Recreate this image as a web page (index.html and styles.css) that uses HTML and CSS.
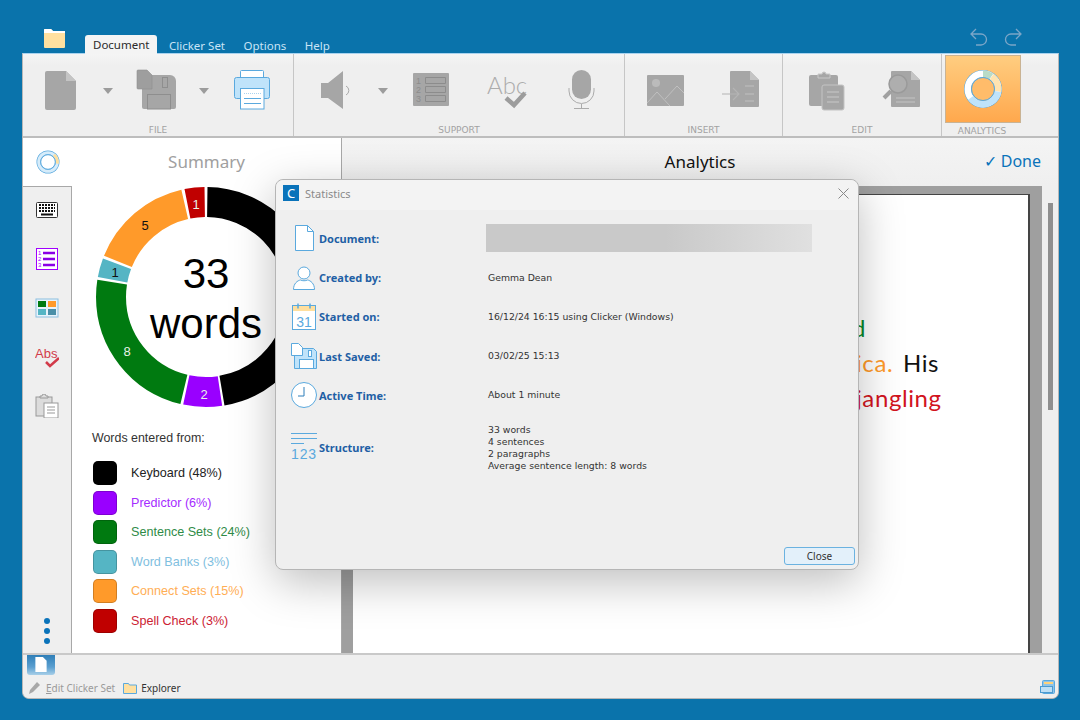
FILE: index.html
```html
<!DOCTYPE html>
<html lang="en">
<head>
<meta charset="utf-8">
<title>Statistics</title>
<link rel="stylesheet" href="styles.css">
</head>
<body>
<div class="screen">
  <header class="topbar">
    <svg class="folder" viewBox="0 0 23 22"><path d="M1 3a1 1 0 0 1 1-1h6l2 2h11a1 1 0 0 1 1 1v15a1 1 0 0 1-1 1H2a1 1 0 0 1-1-1z" fill="#ffe0a0"/><path d="M1 3a1 1 0 0 1 1-1h6l2 2h12v2H1z" fill="#fff"/></svg>
    <nav class="tabs">
      <span class="tab active">Document</span>
      <span class="tab">Clicker Set</span>
      <span class="tab">Options</span>
      <span class="tab">Help</span>
    </nav>
    <div class="history">
      <svg viewBox="0 0 18 18"><path d="M6 1 1 6l5 5M1 6h10a5.500 5.500 0 0 1 0 11H6" fill="none" stroke="#7ba6c8" stroke-width="1.300"/></svg>
      <svg viewBox="0 0 18 18"><path d="m12 1 5 5-5 5M17 6H7a5.500 5.500 0 0 0 0 11h5" fill="none" stroke="#7ba6c8" stroke-width="1.300"/></svg>
    </div>
  </header>

  <div class="window">
    <section class="ribbon">
      <div class="group g-file">
        <div class="tools">
          <svg class="tool" viewBox="0 0 40 42"><path d="M7 1h19l10 10v27a2 2 0 0 1-2 2H7a2 2 0 0 1-2-2V3a2 2 0 0 1 2-2z" fill="#a6a6a6"/><path d="M26 1v10h10z" fill="#c4c4c4"/></svg>
          <i class="caret"></i>
          <svg class="tool" viewBox="0 0 40 42"><path d="M6 5h28a6 6 0 0 1 6 6v26a2 2 0 0 1-2 2H8a2 2 0 0 1-2-2z" fill="#a6a6a6"/><path d="M2 0h9l5 5v14H2a1 1 0 0 1-1-1V1a1 1 0 0 1 1-1z" fill="#9e9e9e" stroke="#8e8e8e" stroke-width=".6"/><rect x="26.500" y="7.500" width="5" height="10" fill="none" stroke="#8e8e8e"/><rect x="11.500" y="24.500" width="23" height="14.500" fill="none" stroke="#8e8e8e"/></svg>
          <i class="caret"></i>
          <svg class="tool" viewBox="0 0 40 42"><rect x="8.500" y=".500" width="23" height="9" rx="1" fill="#fff" stroke="#5aa9de"/><rect x="2.500" y="7.500" width="35" height="21" rx="2" fill="#bfe3fa" stroke="#5aa9de"/><rect x="8.500" y="18.500" width="23.500" height="20.500" fill="#fff" stroke="#5aa9de"/><path d="M12 23.500h17" stroke="#a9d3ef" stroke-dasharray="1 1"/><path d="M12 28.500h17M12 33.500h17" stroke="#5aa9de"/></svg>
        </div>
        <div class="group-label">FILE</div>
      </div>
      <div class="group g-support">
        <div class="tools">
          <svg class="tool" viewBox="0 0 40 42"><path d="M6 13h7l15-12v38L13 28H6z" fill="#a6a6a6"/><path d="M31 16a5 5 0 0 1 0 9" fill="none" stroke="#aaa"/></svg>
          <i class="caret"></i>
          <svg class="tool" viewBox="0 0 40 42"><rect x="2" y="3" width="36" height="33" rx="1" fill="#a6a6a6"/><path d="M14.500 7.500h20v6h-20zM14.500 16.500h20v6h-20zM14.500 25.500h20v6h-20z" fill="none" stroke="#8c8c8c"/><text class="mini" x="5" y="14">1</text><text class="mini" x="5" y="23">2</text><text class="mini" x="5" y="32">3</text></svg>
          <svg class="tool" viewBox="0 0 40 42"><text class="abc" x="1" y="24">Abc</text><path d="m20 28 8 7 11-12" fill="none" stroke="#9c9c9c" stroke-width="4.500"/></svg>
          <svg class="tool" viewBox="0 0 40 42"><rect x="11" y="0" width="19" height="29" rx="9.500" fill="#a6a6a6"/><path d="M8 18v3a12.500 12.500 0 0 0 25 0v-3M20.500 34v4M13 38.500h15" fill="none" stroke="#ababab"/></svg>
        </div>
        <div class="group-label">SUPPORT</div>
      </div>
      <div class="group g-insert">
        <div class="tools">
          <svg class="tool" viewBox="0 0 40 42"><rect x="2" y="5" width="37" height="31" rx="1" fill="#a6a6a6"/><path d="m2 33 10-11 13 14M20 29 32 16l7 7" fill="none" stroke="#c0c0c0"/><circle cx="11" cy="13" r="4" fill="#bbb"/></svg>
          <svg class="tool" viewBox="0 0 40 42"><path d="M11 1h19l9 9v26a1 1 0 0 1-1 1H11a1 1 0 0 1-1-1V2a1 1 0 0 1 1-1z" fill="#a6a6a6"/><path d="M30 1v9h9z" fill="#c4c4c4"/><path d="M2 24h17m-6-6 6 6-6 6" fill="none" stroke="#b4b4b4" stroke-width="1.200"/><path d="M25 16h9M25 24h9M25 31h9" stroke="#c0c0c0"/></svg>
        </div>
        <div class="group-label">INSERT</div>
      </div>
      <div class="group g-edit">
        <div class="tools">
          <svg class="tool" viewBox="0 0 40 42"><rect x="3" y="5" width="29" height="31" rx="2" fill="#a6a6a6"/><path d="M12 8V4h4a2 2 0 0 1 4 0h4v4z" fill="#a6a6a6" stroke="#c8c8c8"/><rect x="16" y="15" width="22" height="25" rx="2" fill="#a6a6a6" stroke="#c4c4c4"/><path d="M21 22h12M21 27h12M21 32h12" stroke="#c8c8c8"/></svg>
          <svg class="tool" viewBox="0 0 40 42"><path d="M11 1h19l9 9v26a1 1 0 0 1-1 1H11a1 1 0 0 1-1-1V2a1 1 0 0 1 1-1z" fill="#a6a6a6"/><path d="M30 1v9h9z" fill="#c4c4c4"/><circle cx="17" cy="14" r="9" fill="#aeaeae" stroke="#9a9a9a" stroke-width="1.500"/><path d="m10 21-7 7" stroke="#a0a0a0" stroke-width="4"/><path d="M15 28h19M15 32h19" stroke="#c4c4c4"/></svg>
        </div>
        <div class="group-label">EDIT</div>
      </div>
      <div class="group g-analytics">
        <div class="tile">
          <svg class="tile-icon" viewBox="0 0 40 40"><circle cx="20" cy="20" r="19" fill="#5aa9de"/><circle cx="20" cy="20" r="15.200" fill="none" stroke="#fff" stroke-width="6.500"/><circle cx="20" cy="20" r="15.200" pathLength="360" fill="none" stroke="#b9dcc8" stroke-width="6.500" stroke-dasharray="34 360" transform="rotate(-90 20 20)"/><circle cx="20" cy="20" r="15.200" pathLength="360" fill="none" stroke="#ffe3b0" stroke-width="6.500" stroke-dasharray="64 360" transform="rotate(-55 20 20)"/><circle cx="20" cy="20" r="15.200" pathLength="360" fill="none" stroke="#bfe3fa" stroke-width="6.500" stroke-dasharray="134 360" transform="rotate(10 20 20)"/><circle cx="20" cy="20" r="11.500" fill="#ffbc6a" stroke="#5aa9de"/></svg>
        </div>
        <div class="group-label">ANALYTICS</div>
      </div>
    </section>

    <main class="main">
      <section class="summary">
        <aside class="rail">
          <div class="rail-head">
            <svg class="rail-logo" viewBox="0 0 24 24"><circle cx="12" cy="12" r="11.500" fill="#5aa9de"/><circle cx="12" cy="12" r="9.300" fill="none" stroke="#d6ecfa" stroke-width="3"/><circle cx="12" cy="12" r="9.300" pathLength="360" fill="none" stroke="#ffdf9e" stroke-width="3" stroke-dasharray="60 360" transform="rotate(-50 12 12)"/><circle cx="12" cy="12" r="7.300" fill="#fff" stroke="#5aa9de"/></svg>
          </div>
          <div class="rail-body">
            <svg class="rail-icon" viewBox="0 0 24 24"><rect x="1.500" y="4.500" width="21" height="15" rx="1" fill="#fff" stroke="#333"/><path d="M4 7h16M4 10h16M4 13h16" stroke="#111" stroke-width="2" stroke-dasharray="2 1"/><path d="M6 16.500h12" stroke="#111" stroke-width="2"/></svg>
            <svg class="rail-icon" viewBox="0 0 24 24"><rect x="1.500" y="1.500" width="21" height="21" fill="#fff" stroke="#a000ff"/><path d="M8 6h12M8 12h12M8 18h12" stroke="#8a00e6" stroke-width="2.500"/><text class="mini purple" x="3" y="8">1</text><text class="mini purple" x="3" y="14">2</text><text class="mini purple" x="3" y="20">3</text></svg>
            <svg class="rail-icon" viewBox="0 0 24 24"><rect x="1" y="3" width="22" height="18" fill="#e8f3fb" stroke="#8cbfe0"/><rect x="3" y="5" width="8" height="6" fill="#007a10"/><rect x="13" y="5" width="8" height="6" fill="#ff9a2a"/><rect x="3" y="13" width="8" height="6" fill="#55b5c4"/><rect x="13" y="13" width="8" height="6" fill="#4a8fa8"/></svg>
            <svg class="rail-icon" viewBox="0 0 24 24"><text class="abs" x="0" y="13">Abs</text><path d="m11 17 4 4 9-8" fill="none" stroke="#d23b4a" stroke-width="2.500"/></svg>
            <svg class="rail-icon" viewBox="0 0 24 24"><rect x="1" y="3" width="16" height="19" fill="#dcdcdc" stroke="#999"/><path d="M5 4V2h2a2 2 0 0 1 4 0h2v2z" fill="#ddd" stroke="#999"/><rect x="9" y="9" width="14" height="15" fill="#fff" stroke="#999"/><path d="M12 13h8M12 16h8M12 19h8" stroke="#999"/></svg>
            <div class="dots"><i></i><i></i><i></i></div>
          </div>
        </aside>
        <div class="summary-body">
          <h2 class="summary-title">Summary</h2>
          <svg class="donut" viewBox="0 0 220 220">
            <g transform="rotate(-90 110 110)" fill="none" stroke-width="30">
              <circle cx="110" cy="110" r="95" pathLength="360" stroke="#000" stroke-dasharray="169.500 360" stroke-dashoffset="-0.800"/>
              <circle cx="110" cy="110" r="95" pathLength="360" stroke="#9900ff" stroke-dasharray="20.500 360" stroke-dashoffset="-171.500"/>
              <circle cx="110" cy="110" r="95" pathLength="360" stroke="#007a10" stroke-dasharray="85.500 360" stroke-dashoffset="-193.500"/>
              <circle cx="110" cy="110" r="95" pathLength="360" stroke="#55b5c4" stroke-dasharray="10 360" stroke-dashoffset="-280.500"/>
              <circle cx="110" cy="110" r="95" pathLength="360" stroke="#ff9a2a" stroke-dasharray="55 360" stroke-dashoffset="-292"/>
              <circle cx="110" cy="110" r="95" pathLength="360" stroke="#c00000" stroke-dasharray="10.500 360" stroke-dashoffset="-348.700"/>
            </g>
            <text class="seg light" x="100" y="22">1</text>
            <text class="seg" x="49" y="43">5</text>
            <text class="seg" x="19" y="90">1</text>
            <text class="seg light" x="31" y="169">8</text>
            <text class="seg light" x="108" y="212">2</text>
            <text class="big" x="110" y="101">33</text>
            <text class="big" x="110" y="151">words</text>
          </svg>
          <h3 class="legend-title">Words entered from:</h3>
          <ul class="legend">
            <li class="legend-row"><span class="swatch s-keyboard"></span><span class="c-keyboard">Keyboard (48%)</span></li>
            <li class="legend-row"><span class="swatch s-predictor"></span><span class="c-predictor">Predictor (6%)</span></li>
            <li class="legend-row"><span class="swatch s-sentence"></span><span class="c-sentence">Sentence Sets (24%)</span></li>
            <li class="legend-row"><span class="swatch s-banks"></span><span class="c-banks">Word Banks (3%)</span></li>
            <li class="legend-row"><span class="swatch s-connect"></span><span class="c-connect">Connect Sets (15%)</span></li>
            <li class="legend-row"><span class="swatch s-spell"></span><span class="c-spell">Spell Check (3%)</span></li>
          </ul>
        </div>
      </section>

      <section class="analytics">
        <div class="analytics-head">
          <span></span>
          <h2 class="analytics-title">Analytics</h2>
          <span class="done">✓ Done</span>
        </div>
        <div class="doc-row">
          <div class="doc-area">
            <div class="page">
              <p class="line c-sentence-doc first">d</p>
              <p class="line"><span class="c-connect-doc">ica.</span> His</p>
              <p class="line c-spell-doc">jangling</p>
            </div>
          </div>
          <div class="scroll"><div class="thumb"></div></div>
        </div>
      </section>
    </main>

    <footer class="bottom">
      <div class="doc-tab">
        <svg viewBox="0 0 14 16"><path d="M1 0h8l4 4v12H1z" fill="#fff"/></svg>
      </div>
      <div class="status">
        <svg class="pencil" viewBox="0 0 14 14"><path d="M1 13l1-4 7-8 3 3-7 7z" fill="#a8a8a8"/></svg>
        <span class="status-muted"><u>E</u>dit Clicker Set</span>
        <svg class="mini-folder" viewBox="0 0 14 12"><path d="M.500 1.500h5l1 1.500h7v8.500H.500z" fill="#ffe0a0" stroke="#5aa9de"/></svg>
        <span class="status-dark">Explorer</span>
        <svg class="kbd-icon" viewBox="0 0 15 15"><rect x="2.500" y=".500" width="12" height="13" rx="1" fill="#8fc4e8" stroke="#5aa9de"/><path d="M4 3h9" stroke="#ffd27a" stroke-width="2"/><rect x=".500" y="6.500" width="12" height="6" fill="#bfe0f5" stroke="#4d9bd0"/></svg>
      </div>
    </footer>
  </div>

  <div class="dialog">
    <div class="dialog-title">
      <span class="app-badge">C</span>
      <span class="dialog-name">Statistics</span>
      <svg class="dialog-x" viewBox="0 0 11 11"><path d="m.500.500 10 10m0-10-10 10" stroke="#888" fill="none"/></svg>
    </div>
    <div class="stats">
      <div class="stat stat-first">
        <svg class="stat-icon" viewBox="0 0 28 28"><path d="M5.500 1.500h12l6 6v19h-18z" fill="#fff" stroke="#5aa9de"/><path d="M17.500 1.500v6h6" fill="none" stroke="#5aa9de"/></svg>
        <span class="stat-label">Document:</span>
        <div class="redacted"></div>
      </div>
      <div class="stat">
        <svg class="stat-icon" viewBox="0 0 28 28"><circle cx="14" cy="9" r="6" fill="#fff" stroke="#5aa9de"/><path d="M3.500 25.500c0-6 4-9 7-9.500 2 1 5 1 7 0 3 .5 7 3.500 7 9.500z" fill="#fff" stroke="#5aa9de"/></svg>
        <span class="stat-label">Created by:</span>
        <span class="stat-value">Gemma Dean</span>
      </div>
      <div class="stat">
        <svg class="stat-icon" viewBox="0 0 28 28"><rect x="2.500" y="2.500" width="23" height="24" fill="#fff" stroke="#5aa9de"/><rect x="3" y="3" width="22" height="5" fill="#ffdf9e"/><path d="M8 .500v5M20 .500v5" stroke="#5aa9de" stroke-width="1.500"/><text class="cal" x="14" y="24">31</text></svg>
        <span class="stat-label">Started on:</span>
        <span class="stat-value">16/12/24 16:15 using Clicker (Windows)</span>
      </div>
      <div class="stat">
        <svg class="stat-icon" viewBox="0 0 28 28"><path d="M4.500 6.500h19l3 3v17h-22z" fill="#bfe3fa" stroke="#5aa9de"/><path d="M1.500 1.500h7l4 4v8h-11z" fill="#fff" stroke="#5aa9de"/><rect x="9.500" y="17.500" width="14" height="9" fill="#fff" stroke="#5aa9de"/><rect x="18.500" y="8.500" width="3" height="6" fill="#fff" stroke="#5aa9de"/></svg>
        <span class="stat-label">Last Saved:</span>
        <span class="stat-value">03/02/25 15:13</span>
      </div>
      <div class="stat">
        <svg class="stat-icon" viewBox="0 0 28 28"><circle cx="14" cy="14" r="12.500" fill="#fff" stroke="#5aa9de"/><path d="M14 6v9H8" fill="none" stroke="#2f7fba"/></svg>
        <span class="stat-label">Active Time:</span>
        <span class="stat-value">About 1 minute</span>
      </div>
      <div class="stat stat-tall">
        <svg class="stat-icon" viewBox="0 0 28 28"><path d="M1 .500h26M1 5.500h26M1 10.500h13" stroke="#5aa9de"/><text class="num" x="14" y="26">123</text></svg>
        <span class="stat-label">Structure:</span>
        <div class="stat-value stat-lines">33 words<br>4 sentences<br>2 paragraphs<br>Average sentence length: 8 words</div>
      </div>
    </div>
    <div class="dialog-foot"><button class="close-btn">Close</button></div>
  </div>
</div>
</body>
</html>
```

FILE: styles.css
```css
* { box-sizing: border-box; }
html, body { margin: 0; padding: 0; }
body { background: #0a73ab; font-family: "DejaVu Sans", sans-serif; }
h2, h3, p, ul { margin: 0; padding: 0; font-weight: normal; list-style: none; }
svg { display: block; flex: none; }

.screen { position: relative; width: 1080px; height: 720px; padding-left: 22px; overflow: hidden; }

.topbar { height: 53px; display: flex; align-items: flex-end; }
.folder { width: 23px; height: 22px; margin: 0 0 4px 21px; }
.tabs { display: flex; align-items: flex-end; gap: 18.500px; margin-left: 19px; }
.tab { height: 15px; font-size: 11.500px; line-height: 15px; color: #c9e4f6; white-space: nowrap; font-family: "Noto Sans", sans-serif; }
.tab.active { height: 19px; line-height: 19px; margin: 0 -7px -1px 0; padding: 0 8px; background: #f4f4f4; color: #2b2b2b; border-radius: 3px 3px 0 0; }
.history { margin-left: auto; margin-right: 58px; align-self: flex-start; display: flex; gap: 16px; padding-top: 28px; }
.history svg { width: 18px; height: 18px; }

.window { width: 1037px; height: 646px; display: flex; flex-direction: column; border: 1px solid #b7b7b7; border-top-color: #a9d3ef; border-radius: 0 0 7px 7px; background: #efefef; overflow: hidden; }

.ribbon { height: 84px; display: flex; border-bottom: 2px solid #bdbdbd; background: linear-gradient(#f5f5f5, #efefef 12px); flex: none; }
.group { display: flex; flex-direction: column; border-right: 1px solid #c6c6c6; }
.g-file { width: 271px; padding-left: 17px; }
.g-support { width: 331px; padding-left: 21px; }
.g-insert { width: 158px; padding-left: 20px; }
.g-edit { width: 159px; padding-left: 23px; }
.g-analytics { width: 80px; border-right: 0; padding-left: 3px; }
.tools { display: flex; gap: 35px; padding-top: 16px; height: 71px; }
.tool { width: 40px; height: 42px; overflow: visible; }
.caret { flex: none; width: 0; height: 0; margin: 18px -12px 0; border: 5px solid transparent; border-top: 6px solid #9c9c9c; border-bottom: 0; }
.group-label { height: 12px; margin-left: -17px; font-size: 9px; line-height: 12px; text-align: center; color: #a2a2a2; }
.g-support .group-label { margin-left: -21px; }
.g-insert .group-label { margin-left: -20px; }
.g-edit .group-label { margin-left: -23px; }
.g-analytics .group-label { margin-left: -3px; }
.tile { width: 76px; height: 68px; margin: 1px 0 2px; background: linear-gradient(#ffcd80, #ffa84d); border: 1px solid #c9b394; display: flex; align-items: center; justify-content: center; flex: none; }
.tile-icon { width: 40px; height: 40px; }

.mini { font-size: 9px; fill: #8c8c8c; font-family: "Liberation Sans", sans-serif; }
.mini.purple { font-size: 6px; fill: #a000ff; }
.abc { font-size: 24px; font-weight: 300; fill: #acacac; font-family: "Lato", sans-serif; }
.abs { font-size: 13px; fill: #d23b4a; font-family: "Liberation Sans", sans-serif; }

.main { flex: 1; display: flex; min-height: 0; }
.summary { width: 319px; display: flex; background: #fff; border-right: 1px solid #a8a8a8; }
.rail { width: 49px; display: flex; flex-direction: column; }
.rail-head { height: 48px; padding-bottom: 1px; display: flex; align-items: center; justify-content: center; }
.rail-logo { width: 24px; height: 24px; }
.rail-body { flex: 1; display: flex; flex-direction: column; align-items: center; gap: 25px; padding: 11px 0 9px; background: #efefef; border-top: 1px solid #a8a8a8; border-right: 1px solid #a8a8a8; }
.rail-icon { width: 24px; height: 24px; }
.dots { margin-top: auto; display: flex; flex-direction: column; gap: 4px; }
.dots i { width: 6px; height: 6px; border-radius: 50%; background: #0a73ba; }

.summary-body { flex: 1; display: flex; flex-direction: column; padding-left: 24px; min-width: 0; }
.summary-title { height: 48px; margin-left: -24px; line-height: 48px; text-align: center; font-size: 17px; color: #a0a0a0; font-family: "Noto Sans", sans-serif; }
.donut { width: 220px; height: 220px; margin-top: 1px; }
.seg { font-size: 13px; fill: #111; font-family: "Liberation Sans", sans-serif; text-anchor: middle; }
.seg.light { fill: #e8f3e8; }
.big { font-size: 42px; fill: #000; font-family: "Liberation Sans", sans-serif; text-anchor: middle; }
.legend-title { margin: 24px 0 0 -4px; font-size: 12.400px; line-height: 14px; color: #333; font-family: "Liberation Sans", sans-serif; }
.legend { display: flex; flex-direction: column; gap: 5.600px; margin: 16px 0 0 -3px; font-size: 12.600px; font-family: "Liberation Sans", sans-serif; }
.legend-row { display: flex; align-items: center; height: 24px; gap: 14px; }
.swatch { width: 24px; height: 24px; border-radius: 5px; border: 1px solid rgba(0,0,0,.18); }
.s-keyboard { background: #000; } .c-keyboard { color: #222; }
.s-predictor { background: #9900ff; } .c-predictor { color: #a52cff; }
.s-sentence { background: #007a10; } .c-sentence { color: #2f8b47; }
.s-banks { background: #55b5c4; } .c-banks { color: #7fc0e0; }
.s-connect { background: #ff9a2a; } .c-connect { color: #ffae55; }
.s-spell { background: #c00000; } .c-spell { color: #cc2233; }

.analytics { flex: 1; display: flex; flex-direction: column; min-width: 0; }
.analytics-head { height: 48px; padding: 0 17px 2px 0; display: grid; grid-template-columns: 1fr auto 1fr; align-items: center; background: linear-gradient(#f4f4f4, #efefef); }
.analytics-title { font-size: 17px; color: #111; font-family: "Noto Sans", sans-serif; padding-left: 17px; }
.done { justify-self: end; font-size: 16px; color: #0a73ba; font-family: "Noto Sans", sans-serif; }
.doc-row { flex: 1; display: flex; min-height: 0; }
.doc-area { flex: 1; padding: 8px 12px 0 11px; background: #9f9f9f; min-width: 0; }
.page { height: 100%; background: #fff; border-top: 1px solid #444; border-right: 2px solid #444; padding: 115px 0 0 503px; font-family: "Lato", sans-serif; font-size: 24px; line-height: 35px; letter-spacing: .6px; word-spacing: 3px; color: #111; }
.line.first { margin-left: -4px; }
.c-sentence-doc { color: #0a8a2a; } .c-connect-doc { color: #ff9a2a; } .c-spell-doc { color: #d2141e; }
.scroll { width: 16px; padding: 17px 0 0 6px; background: #efefef; }
.thumb { width: 5px; height: 207px; background: #8f8f8f; }

.bottom { height: 45px; flex: none; display: flex; flex-direction: column; border-top: 2px solid #c9c9c9; padding-left: 4px; background: #efefef; }
.doc-tab { width: 28px; height: 20px; display: flex; justify-content: center; align-items: flex-start; padding-top: 2px; background: linear-gradient(#2f7fb8, #5a9fd0 60%, #a8cfe8); border-radius: 0 0 3px 3px; }
.doc-tab svg { width: 14px; height: 15px; }
.status { flex: 1; display: flex; align-items: center; font-size: 10px; padding: 2px 0 0; }
.pencil { width: 14px; height: 14px; margin-left: 1px; }
.status-muted { margin-left: 4px; color: #9a9a9a; font-family: "Noto Sans", sans-serif; white-space: nowrap; }
.mini-folder { width: 14px; height: 12px; margin-left: 8px; }
.status-dark { margin-left: 4px; color: #333; font-family: "Noto Sans", sans-serif; }
.kbd-icon { width: 15px; height: 15px; margin: 0 3px 0 auto; }

.dialog { position: absolute; left: 275px; top: 179px; width: 584px; height: 391px; display: flex; flex-direction: column; background: #efefef; border: 1px solid #b5b5b5; border-radius: 8px; box-shadow: 0 12px 45px rgba(0,0,0,.26); }
.dialog-title { height: 30px; flex: none; display: flex; align-items: center; padding: 0 9px 4px 7px; background: #f3f3f3; border-radius: 8px 8px 0 0; }
.app-badge { width: 16px; height: 16px; background: #0a73ba; color: #fff; font-size: 13px; line-height: 16px; text-align: center; font-family: "Noto Sans", sans-serif; }
.dialog-name { margin-left: 6px; font-size: 11px; color: #8a8a8a; font-family: "Noto Sans", sans-serif; }
.dialog-x { width: 11px; height: 11px; margin-left: auto; }
.stats { flex: 1; padding: 8px 0 0 14px; }
.stat { display: grid; grid-template-columns: 29px 169px 1fr; align-items: center; height: 39.250px; }
.stat-first { height: 40px; }
.stat-tall { height: 58px; margin-top: 3px; }
.stat-icon { width: 28px; height: 28px; overflow: visible; }
.stat-label { font-size: 11px; font-weight: bold; color: #1f5fa5; font-family: "Noto Sans", sans-serif; }
.stat-value { font-size: 9.300px; line-height: 12px; color: #333; }
.stat-lines { padding-top: 2px; }
.redacted { width: 326px; height: 28px; margin: 0 0 1px -2px; background: linear-gradient(90deg, #c9c9c9 55%, #e0e0e0); }
.cal { font-size: 14px; fill: #5aa9de; font-family: "Liberation Sans", sans-serif; text-anchor: middle; }
.num { font-size: 14px; fill: #5aa9de; font-family: "Liberation Sans", sans-serif; text-anchor: middle; letter-spacing: .8px; }
.dialog-foot { flex: none; display: flex; justify-content: flex-end; padding: 0 3px 4px 0; }
.close-btn { width: 71px; height: 18px; padding: 0; border: 1px solid #6bb2e0; border-radius: 3px; background: #e3f0fa; color: #333; font-size: 10px; font-family: "Noto Sans", sans-serif; }
```
